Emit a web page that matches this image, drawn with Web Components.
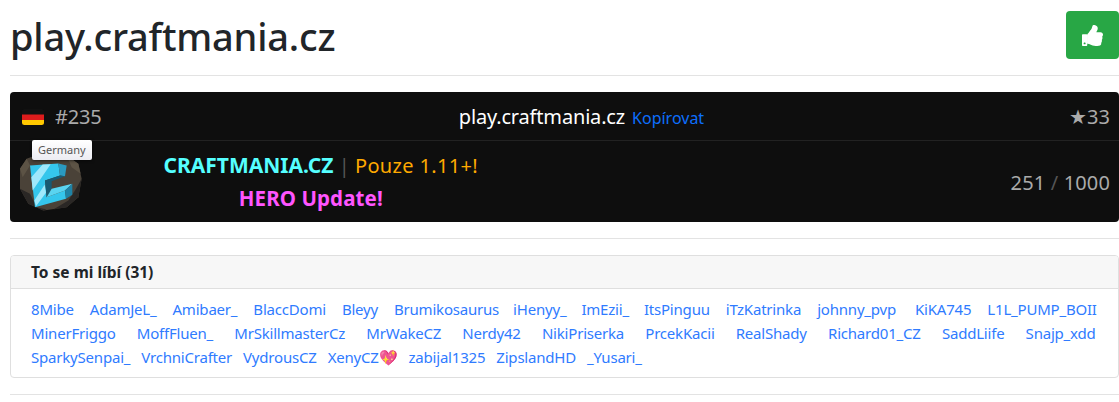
<!DOCTYPE html>
<html lang="cs">
<head>
<meta charset="utf-8">
<title>play.craftmania.cz</title>
<style>
  html, body { margin: 0; background: #fff; overflow: hidden; }
  body { font-family: "Noto Sans", "Open Sans", sans-serif; color: #212529; }
</style>
</head>
<body>

<template id="server-page-tpl">
  <style>
    :host { display: block; padding-left: 10px; width: 1109px; }
    hr { border: 0; border-top: 1px solid #e3e3e3; margin: 0; height: 0; }
  </style>
  <slot name="head"></slot>
  <hr style="margin-bottom:16px">
  <slot name="panel"></slot>
  <hr style="margin:16px 0">
  <slot name="likes"></slot>
  <hr style="margin-top:16px">
</template>

<template id="page-head-tpl">
  <style>
    :host { display: flex; justify-content: space-between; align-items: center; height: 75px; }
    h1 { margin: -4px 0 0; font-size: 38px; font-weight: 500; letter-spacing: -.2px; line-height: 54px; color: #212529; }
    button {
      display: flex; align-items: center; justify-content: center;
      width: 53px; height: 48px; margin-top: -5px; padding: 0;
      background: #28a745; border: 0; border-radius: 4px;
    }
  </style>
  <h1><slot></slot></h1>
  <button aria-label="like">
    <svg width="21" height="21" viewBox="0 0 512 512">
      <path fill="#fff" d="M104 224H24c-13.3 0-24 10.700-24 24v240c0 13.300 10.700 24 24 24h80c13.300 0 24-10.700 24-24V248c0-13.300-10.700-24-24-24zM64 472c-13.300 0-24-10.700-24-24s10.700-24 24-24 24 10.700 24 24-10.700 24-24 24zM384 81.500c0 42.400-26 66.200-33.300 94.500h101.700c33.400 0 59.400 27.700 59.600 58.100.1 17.900-7.500 37.200-19.400 49.200l-.1.100c9.800 23.300 8.200 56-9.300 79.400 8.700 25.900-.1 57.700-16.400 74.800 4.300 17.600 2.200 32.600-6.100 44.700C440.400 512 384 512 336.400 512h-3.200c-53.700 0-97.700-19.600-133-35.300-17.700-7.900-40.900-17.600-58.500-17.900-7.300-.1-13.100-6-13.100-13.300V231.700c0-3.500 1.400-6.900 3.900-9.400 39.700-39.200 56.700-80.700 89.200-113.300 14.800-14.800 20.200-37.200 25.400-58.800C251.100 32.200 260.300 0 277.500 0c20.700 0 106.500 6.900 106.500 81.500z"/>
    </svg>
  </button>
</template>

<template id="server-panel-tpl">
  <style>
    :host { display: block; position: relative; height: 130px; background: #0e0e0e; border-radius: 4px; color: #aaa; font-size: 20px; }
    .top {
      display: grid; grid-template-columns: 1fr auto 1fr; align-items: center;
      height: 48px; padding: 0 9px 0 12px; border-bottom: 1px solid #222;
    }
    .rank { display: flex; align-items: center; gap: 11px; letter-spacing: -.2px; }
    .rank svg { display: block; margin-top: 2px; }
    .addr { color: #fff; letter-spacing: -.17px; white-space: nowrap; padding-left: 31px; }
    .addr a { color: #0d6efd; font-size: 16px; margin-left: 2px; letter-spacing: 0; }
    .stars { text-align: right; }
    .bottom {
      display: grid; grid-template-columns: 76px 1fr auto; align-items: center;
      height: 81px; padding: 0 9px 0 9px;
    }
    .motd { text-align: center; font-weight: 700; line-height: 32px; padding-right: 464px; white-space: nowrap; }
    .motd .c { color: #55ffff; font-size: 21px; }
    .motd .sep { color: #555; font-weight: 400; }
    .motd .o { color: #ffaa00; font-weight: 400; letter-spacing: .35px; }
    .motd .p { color: #ff55ff; font-size: 20.500px; letter-spacing: .1px; padding-right: 20px; }
    .players { letter-spacing: .15px; margin-top: 2px; }
    .players i { font-style: normal; color: #555; }
    .tip {
      position: absolute; left: 22px; top: 48px; padding: 0 6px; height: 20px; line-height: 20px;
      background: linear-gradient(#fff, #ececf2); color: #555; font-size: 11px;
      border-radius: 2px; box-shadow: 0 1px 3px #0008;
    }
    .logo { display: block; }
  </style>
  <div class="top">
    <div class="rank">
      <svg width="22" height="16" viewBox="0 0 22 16">
        <clipPath id="fl"><rect width="22" height="16" rx="2.500"/></clipPath>
        <g clip-path="url(#fl)">
          <rect width="22" height="5.500" fill="#111"/>
          <rect y="5.500" width="22" height="5.500" fill="#dd1c1c"/>
          <rect y="11" width="22" height="5" fill="#ffc800"/>
        </g>
      </svg>
      <span>#235</span>
    </div>
    <div class="addr">play.craftmania.cz <a>Kopírovat</a></div>
    <div class="stars">★33</div>
  </div>
  <div class="bottom">
    <svg class="logo" width="66" height="66" viewBox="0 0 66 66">
      <g transform="translate(-9,-13.5) scale(.3333)">
        <path fill="#4a4238" d="M30 100 50 70 90 55 170 60 205 85 215 130 205 185 170 215 100 225 55 205 30 160Z"/>
        <path fill="#2a2725" d="M30 160 60 175 80 215 110 222 100 225 55 205ZM215 130 205 185 170 215 130 222 175 195 195 165Z"/>
        <path fill="#5c5345" d="M170 60 205 85 212 115 185 95ZM50 70 60 90 38 125 30 100Z"/>
        <path fill="#35c6ec" d="M60 90 145 84 150 120 105 135 110 185 165 165 168 190 75 215Z"/>
        <path fill="#9fe8fb" d="M64 125 98 87 122 86 68 165ZM73 195 104 148 108 172 78 212Z"/>
        <path fill="#2a9ac0" d="M145 84 170 90 165 122 150 120Z"/>
        <path fill="#175a73" d="M105 135 150 120 165 122 125 137 125 160 110 185Z"/>
        <path fill="#5ad4f0" d="M110 185 125 160 187 145 165 165Z"/>
        <path fill="#1f83a6" d="M165 165 187 145 187 178 168 190Z"/>
      </g>
    </svg>
    <div class="motd">
      <div><span class="c">CRAFTMANIA.CZ</span> <span class="sep">|</span> <span class="o">Pouze 1.11+!</span></div>
      <div class="p">HERO Update!</div>
    </div>
    <div class="players">251 <i>/</i> 1000</div>
  </div>
  <div class="tip">Germany</div>
</template>

<template id="like-card-tpl">
  <style>
    :host { display: block; border: 1px solid #dfdfdf; border-radius: 4px; overflow: hidden; }
    header {
      height: 32px; line-height: 32px; padding: 0 20px; background: #f7f7f7;
      border-bottom: 1px solid #dfdfdf; font-size: 15.500px; font-weight: 700; color: #212529;
    }
    .body { padding: 8px 20px 8px; }
  </style>
  <header><slot name="title"></slot></header>
  <div class="body"><slot></slot></div>
</template>

<template id="name-row-tpl">
  <style>
    :host { display: flex; height: 24px; align-items: center; gap: var(--gap, 15px); font-size: 15px; color: #2f7bff; white-space: nowrap; letter-spacing: -.2px; }
  </style>
  <slot></slot>
</template>

<script>
function shadow (el, id) {
  el.attachShadow({mode: "open"}).appendChild(document.getElementById(id).content.cloneNode(true));
}

customElements.define("server-page", class extends HTMLElement {
  connectedCallback () { shadow(this, "server-page-tpl"); }
});
customElements.define("page-head", class extends HTMLElement {
  connectedCallback () { shadow(this, "page-head-tpl"); }
});
customElements.define("server-panel", class extends HTMLElement {
  connectedCallback () { shadow(this, "server-panel-tpl"); }
});
customElements.define("like-card", class extends HTMLElement {
  connectedCallback () { shadow(this, "like-card-tpl"); }
});
customElements.define("name-row", class extends HTMLElement {
  connectedCallback () { shadow(this, "name-row-tpl"); }
});
</script>

<server-page>
  <page-head slot="head">play.craftmania.cz</page-head>
  <server-panel slot="panel"></server-panel>
  <like-card slot="likes">
    <span slot="title">To se mi líbí (31)</span>
    <name-row style="--gap:16px"><span>8Mibe</span><span>AdamJeL_</span><span>Amibaer_</span><span>BlaccDomi</span><span>Bleyy</span><span>Brumikosaurus</span><span style="margin-left:-2px">iHenyy_</span><span style="margin-left:-1px">ImEzii_</span><span style="margin-left:-1px">ItsPinguu</span><span>iTzKatrinka</span><span>johnny_pvp</span><span style="margin-left:3px">KiKA745</span><span>L1L_PUMP_BOII</span></name-row>
    <name-row style="--gap:21.200px"><span>MinerFriggo</span><span>MoffFluen_</span><span>MrSkillmasterCz</span><span>MrWakeCZ</span><span>Nerdy42</span><span>NikiPriserka</span><span>PrcekKacii</span><span>RealShady</span><span>Richard01_CZ</span><span>SaddLiife</span><span>Snajp_xdd</span></name-row>
    <name-row style="--gap:11px"><span>SparkySenpai_</span><span>VrchniCrafter</span><span>VydrousCZ</span><span>XenyCZ💖</span><span>zabijal1325</span><span>ZipslandHD</span><span>_Yusari_</span></name-row>
  </like-card>
</server-page>
</body>
</html>
